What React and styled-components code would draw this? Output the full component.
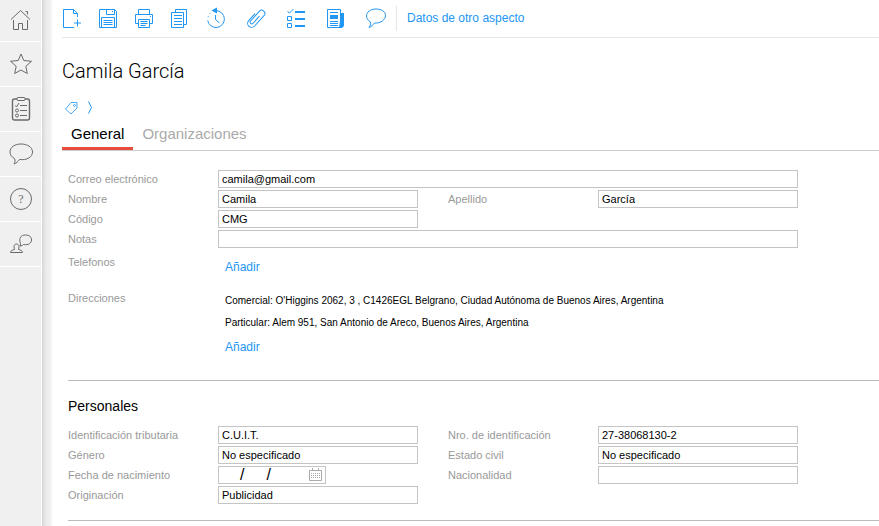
import React, { Fragment, useId, useState } from "react";
import styled, { createGlobalStyle } from "styled-components";

const GlobalStyle = createGlobalStyle`
  * {
    box-sizing: border-box;
  }
  body {
    margin: 0;
    background: #fff;
    color: #000;
    font-family: "Liberation Sans", Arial, sans-serif;
    font-size: 11px;
  }
  button, input {
    font-family: inherit;
  }
`;

// layout
const Page = styled.div`
  display: flex;
  min-height: 100vh;
`;

const Sidebar = styled.nav`
  flex: none;
  width: 42px;
  background: #f0f0f0;
  border-right: 1px solid #fff;
`;

const SidebarShadow = styled.div`
  flex: none;
  width: 10px;
  background: linear-gradient(to right, #d6d6d6, #ebebeb 40%, #f5f5f5);
`;

const SidebarButton = styled.button`
  display: flex;
  align-items: center;
  justify-content: center;
  width: 100%;
  height: 45px;
  padding: 0;
  border: 0;
  border-bottom: 1px solid #fff;
  background: none;
  color: #6a6a6a;
  cursor: pointer;

  &:first-child {
    height: 42px;
  }
`;

const Main = styled.main`
  flex: 1;
  min-width: 0;
  padding-left: 10px;
`;

// toolbar
const Toolbar = styled.header`
  display: flex;
  align-items: center;
  height: 38px;
  border-bottom: 1px solid #e6e6e6;
`;

const ToolGroup = styled.div`
  display: flex;
  gap: ${(props) => props.$gap}px;
  margin-right: ${(props) => props.$after}px;
`;

const ToolButton = styled.button`
  display: flex;
  align-items: center;
  width: 20px;
  height: 20px;
  padding: 0;
  border: 0;
  background: none;
  color: #2196f3;
  cursor: pointer;
`;

const ToolbarLink = styled.a`
  padding-left: 10px;
  border-left: 1px solid #e6e6e6;
  color: #2196f3;
  font-size: 12px;
  line-height: 25px;
  text-decoration: none;
`;

// heading
const Title = styled.h1`
  margin: 19px 0 13px;
  font-family: Roboto, sans-serif;
  font-size: 20px;
  font-weight: 300;
  line-height: 28px;
`;

const TagRow = styled.div`
  display: flex;
  align-items: center;
  height: 20px;
`;

// tabs
const TabList = styled.div`
  display: flex;
  border-bottom: 1px solid #ccc;
`;

const Tab = styled.button`
  padding: 7px 9px 4px;
  border: 0;
  border-bottom: 3px solid ${(props) => (props.$active ? "#e74c3c" : "transparent")};
  background: none;
  color: ${(props) => (props.$active ? "#000" : "#aaa")};
  font-size: 15px;
  line-height: 18px;
  cursor: pointer;
`;

// form
const Form = styled.form`
  padding: 19px 0 0 6px;
`;

const Section = styled.section`
  padding-bottom: 14px;
  border-bottom: 1px solid #bbb;
`;

const SectionTitle = styled.h2`
  margin: 15px 0 10px;
  font-size: 14px;
  font-weight: 400;
  line-height: 20px;
`;

const Fields = styled.div`
  display: grid;
  grid-template-columns: 150px 200px 30px 150px 200px;
  grid-auto-rows: 20px;
`;

const Label = styled.label`
  grid-column: ${(props) => (props.$second ? 4 : 1)};
  color: #999;
  line-height: 18px;
`;

const Input = styled.input`
  grid-column: ${(props) => (props.$wide ? "2 / 6" : "auto")};
  width: 100%;
  height: 18px;
  margin: 0;
  padding: 0 3px;
  border: 1px solid #c4c4c4;
  background: #fff;
  color: #000;
  font-size: 11px;
`;

const DateBox = styled.div`
  display: flex;
  align-items: center;
  width: 108px;
  height: 18px;
  padding: 0 2px 0 3px;
  border: 1px solid #c4c4c4;
  font-size: 16px;
  line-height: 16px;
`;

const DatePart = styled.input`
  width: ${(props) => props.$width}px;
  height: 16px;
  padding: 0;
  border: 0;
  background: none;
  font-size: 11px;
`;

const CalendarButton = styled.button`
  display: flex;
  margin-left: auto;
  padding: 0;
  border: 0;
  background: none;
  color: #aaa;
`;

const DetailRow = styled.div`
  display: grid;
  grid-template-columns: 150px 1fr;
  padding-bottom: 6px;
`;

const DetailName = styled.div`
  color: #999;
  line-height: 24px;
`;

const DetailContent = styled.div`
  padding: 4px 0 0 7px;
`;

const Address = styled.p`
  margin: 0;
  font-size: 10px;
  line-height: 22px;
`;

const AddLink = styled.a`
  display: block;
  width: fit-content;
  color: #2196f3;
  font-size: 12px;
  line-height: 26px;
  text-decoration: none;
`;

// icons
const IconSvg = styled.svg`
  flex: none;
  overflow: visible;
`;

const Svg = ({ w = 20, h = w, children }) => (
  <IconSvg
    width={w}
    height={h}
    viewBox={`0 0 ${w} ${h}`}
    fill="none"
    stroke="currentColor"
    aria-hidden="true"
  >
    {children}
  </IconSvg>
);

const sidebarItems = [
  {
    name: "Inicio",
    icon: (
      <Svg w={24}>
        <path d="M2 10.5 11.500 1.500 21 10.500M16.500 2.500h2v3M4.500 11v9.500h5v-6h4v6h5V11" />
      </Svg>
    ),
  },
  {
    name: "Favoritos",
    icon: (
      <Svg w={24}>
        <path
          d="m12 2 2.800 6.500 7.700.8-5.700 5 1.500 7.200-6.300-3.500L5.700 21.500l1.500-7.200-5.700-5 7.700-.8z"
          strokeLinejoin="round"
        />
      </Svg>
    ),
  },
  {
    name: "Tareas",
    icon: (
      <Svg w={20} h={26}>
        <rect x="1.500" y="3" width="17" height="21" rx="2" strokeWidth="1.400" />
        <rect x="6" y="1.500" width="8" height="3" rx="1" fill="#f0f0f0" />
        <path d="M4.500 9.500l1 1.500 2.500-4M9 9.500h7M9 14.500h7M9 19.500h7" />
        <circle cx="6" cy="14.500" r="1.500" />
        <circle cx="6" cy="19.500" r="1.500" />
      </Svg>
    ),
  },
  {
    name: "Mensajes",
    icon: (
      <Svg w={24}>
        <path d="M5.500 16.500C2.500 15 1 12.500 1 10c0-5 5-8 11-8s11.500 3 11.500 8-5.500 8.500-13 7.500c-1.500 2-3 3.500-5.500 4.500 1-1.500 1.500-3.500.5-5.500z" />
      </Svg>
    ),
  },
  {
    name: "Ayuda",
    icon: (
      <Svg w={24}>
        <circle cx="12" cy="12" r="10.500" />
        <text
          x="12"
          y="16"
          textAnchor="middle"
          fontFamily="Liberation Serif, serif"
          fontSize="12"
          fill="currentColor"
          stroke="none"
        >
          ?
        </text>
      </Svg>
    ),
  },
  {
    name: "Soporte",
    icon: (
      <Svg w={24}>
        <path d="M11.500 11.500C9.500 6 12 3 16.500 3c4 0 6 2 6 5s-3 5.500-8 4.500c-1 1-2 1.500-3.500 1.500.5-.5.7-1.500.5-2.500z" />
        <path d="M1.500 20.500h12c0-2-2-2.500-4-3 0-1 .5-1.500.5-3s-1-2.500-2.500-2.500S5 13 5 14.500s.5 2 .5 3c-2 .5-4 1-4 3z" />
      </Svg>
    ),
  },
];

const mainTools = [
  {
    name: "Nuevo",
    icon: (
      <path d="M12 18.500H1.500V.5h10l4 4v3.500M11.500.5v4h4M15.500 10.500v7M12 14h7" />
    ),
  },
  {
    name: "Guardar",
    icon: (
      <path d="M1.500.5h15l2 2v16h-17zM8.500.5v5h8v-5M14 2.500h1M3.500 18.500v-10h13v10M5.500 11.500h9M5.500 13.500h9M5.500 15.500h9" />
    ),
  },
  {
    name: "Imprimir",
    icon: (
      <path d="M4.500 5.500v-5h11v5M4.500 14.500h-3v-9h17v9h-3M4.500 10.500h11v8h-11zM6.500 12.500h7M6.500 14.500h7M6.500 16.500h5M16 7.500h1" />
    ),
  },
  {
    name: "Copiar",
    icon: (
      <path d="M5.500 3.500v-3h11v15h-3M1.500 3.500h12v15h-12zM4 6.500h8M4 9.500h8M4 12.500h8M4 15.500h8" />
    ),
  },
  {
    name: "Historial",
    icon: (
      <>
        <path d="M10 1.700A8.400 8.400 0 1 1 1.700 11.500" />
        <path d="M9.500 6v4.500l4 3.500" />
        <path d="M5.500 1.500 11-1.500v6z" fill="currentColor" stroke="none" />
        <path d="M2 8.500 2.500 7M3.500 5l1-1" strokeWidth="0.600" />
      </>
    ),
  },
];

const extraTools = [
  {
    name: "Adjuntos",
    icon: (
      <path
        d="M-4-3V6.500a4 4 0 0 0 8 0V-7.500a3.200 3.200 0 0 0-6.400 0V5.500a1.700 1.700 0 0 0 3.400 0V-4"
        transform="translate(10 9.500) rotate(42)"
      />
    ),
  },
  {
    name: "Lista",
    icon: (
      <>
        <path d="m1.500 2.500 2 1.500 4-4M1.500 7.500h4v4h-4zM1.500 14.500h4v4h-4z" />
        <path d="M9 3h10M9 10h10M9 17h10" strokeWidth="2" />
      </>
    ),
  },
  {
    name: "Novedades",
    icon: (
      <>
        <path d="M1.500.5h13v18h-13zM4 3.500h8M4 12.500h8M4 14.500h8M4 16.500h8" />
        <path d="M4 6h8v4H4zM15 4h3v13l-2 2h-3z" fill="currentColor" stroke="none" />
      </>
    ),
  },
  {
    name: "Comentarios",
    icon: (
      <path d="M4.500 13C2 11.500.5 9.500.5 7c0-4 4-7 9.500-7s9.500 2.500 9.500 6.500-4.500 8-11 7.500c-1.500 2-3 3.500-5.500 4.500 1.200-1.500 2-3.500 1.500-5.500z" />
    ),
  },
];

const TagIcon = () => (
  <Svg w={18} h={16}>
    <path d="M3.500 9 9 2.500h6v5.500l-6 6z" strokeWidth="0.800" />
    <circle cx="12.500" cy="5.500" r="1" strokeWidth="0.800" />
  </Svg>
);

const ChevronIcon = () => (
  <Svg w={16}>
    <path d="m6.500 1.500 3 6-3 6" />
  </Svg>
);

const CalendarIcon = () => (
  <Svg w={14}>
    <path d="M.5 2.500h12v10H.5zM3.500 0v3M9.500 0v3" />
    <path d="M2 5.500h10M2 7.500h10M2 9.500h10" strokeDasharray="1 1" />
  </Svg>
);

const Field = ({ label, value, second, wide }) => {
  const id = useId();
  return (
    <Fragment>
      <Label htmlFor={id} $second={second}>
        {label}
      </Label>
      <Input id={id} type="text" defaultValue={value} $wide={wide} />
    </Fragment>
  );
};

const DateField = ({ label }) => {
  const id = useId();
  return (
    <Fragment>
      <Label htmlFor={id}>{label}</Label>
      <DateBox>
        <DatePart id={id} type="text" maxLength={2} $width={18} />
        /
        <DatePart type="text" maxLength={2} aria-label="Mes" $width={22} />
        /
        <DatePart type="text" maxLength={4} aria-label="Año" $width={32} />
        <CalendarButton type="button" aria-label="Calendario">
          <CalendarIcon />
        </CalendarButton>
      </DateBox>
    </Fragment>
  );
};

const Tools = ({ items, gap, after }) => (
  <ToolGroup $gap={gap} $after={after}>
    {items.map((item) => (
      <ToolButton key={item.name} type="button" aria-label={item.name}>
        <Svg>{item.icon}</Svg>
      </ToolButton>
    ))}
  </ToolGroup>
);

const tabs = ["General", "Organizaciones"];

const App = () => {
  const [activeTab, setActiveTab] = useState("General");

  return (
    <Page>
      <GlobalStyle />
      <Sidebar>
        {sidebarItems.map((item) => (
          <SidebarButton key={item.name} type="button" aria-label={item.name}>
            {item.icon}
          </SidebarButton>
        ))}
      </Sidebar>
      <SidebarShadow />
      <Main>
        <Toolbar>
          <Tools items={mainTools} gap={16} after={20} />
          <Tools items={extraTools} gap={20} after={10} />
          <ToolbarLink href="#aspecto">Datos de otro aspecto</ToolbarLink>
        </Toolbar>
        <Title>Camila García</Title>
        <TagRow>
          <ToolButton type="button" aria-label="Etiquetas">
            <TagIcon />
          </ToolButton>
          <ToolButton type="button" aria-label="Ver etiquetas">
            <ChevronIcon />
          </ToolButton>
        </TagRow>
        <TabList role="tablist">
          {tabs.map((tab) => (
            <Tab
              key={tab}
              type="button"
              role="tab"
              aria-selected={tab === activeTab}
              $active={tab === activeTab}
              onClick={() => setActiveTab(tab)}
            >
              {tab}
            </Tab>
          ))}
        </TabList>
        <Form>
          <Section>
            <Fields>
              <Field label="Correo electrónico" value="camila@gmail.com" wide />
              <Field label="Nombre" value="Camila" />
              <Field label="Apellido" value="García" second />
              <Field label="Código" value="CMG" />
              <Field label="Notas" value="" wide />
            </Fields>
            <DetailRow>
              <DetailName>Telefonos</DetailName>
              <DetailContent>
                <AddLink href="#telefono">Añadir</AddLink>
              </DetailContent>
            </DetailRow>
            <DetailRow>
              <DetailName>Direcciones</DetailName>
              <DetailContent>
                <Address>
                  Comercial: O'Higgins 2062, 3 , C1426EGL Belgrano, Ciudad
                  Autónoma de Buenos Aires, Argentina
                </Address>
                <Address>
                  Particular: Alem 951, San Antonio de Areco, Buenos Aires,
                  Argentina
                </Address>
                <AddLink href="#direccion">Añadir</AddLink>
              </DetailContent>
            </DetailRow>
          </Section>
          <Section>
            <SectionTitle>Personales</SectionTitle>
            <Fields>
              <Field label="Identificación tributaria" value="C.U.I.T." />
              <Field label="Nro. de identificación" value="27-38068130-2" second />
              <Field label="Género" value="No especificado" />
              <Field label="Estado civil" value="No especificado" second />
              <DateField label="Fecha de nacimiento" />
              <Field label="Nacionalidad" value="" second />
              <Field label="Originación" value="Publicidad" />
            </Fields>
          </Section>
        </Form>
      </Main>
    </Page>
  );
};

export default App;
